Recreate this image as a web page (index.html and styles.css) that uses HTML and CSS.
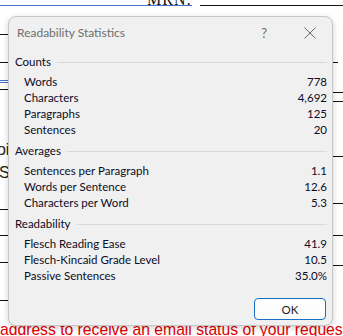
FILE: index.html
```html
<!DOCTYPE html>
<html>
<head>
<meta charset="utf-8">
<link rel="stylesheet" href="styles.css">
</head>
<body>
<div class="doc">
  <div class="top">
    <div class="top-left"><span class="mrn">MRN:</span></div>
    <div class="top-right"></div>
  </div>
  <div class="row r35"><span class="seg l"></span></div>
  <div class="row r63"><span class="seg l"></span><span class="seg tick"></span></div>
  <div class="row r81"><span class="seg l blue"></span></div>
  <div class="row r83"><span class="seg l blue"></span></div>
  <div class="row r90"><span class="seg l"></span></div>
  <div class="row r93"><span class="seg r"></span></div>
  <div class="row r102"><span class="seg r"></span></div>
  <div class="frag frag1">poi</div>
  <div class="frag frag2">Se</div>
  <div class="row r158"><span class="seg r"></span></div>
  <div class="row r205"><span class="seg r"></span></div>
  <div class="row r211"><span class="seg l"></span></div>
  <div class="row r237"><span class="seg l"></span><span class="seg r"></span></div>
  <div class="row r264"><span class="seg l"></span></div>
  <div class="row r267"><span class="seg r"></span></div>
  <div class="row r302"><span class="seg l"></span></div>
  <div class="red">address to receive an email status of your request</div>

  <div class="dialog">
    <div class="titlebar">
      <span class="title">Readability Statistics</span>
      <span class="help">?</span>
      <svg class="close" width="12" height="12" viewBox="0 0 12 12"><path d="M0.5 0.5 L11.5 11.5 M11.5 0.5 L0.5 11.5" stroke="#6b6b6b" stroke-width="1" fill="none"/></svg>
    </div>
    <div class="body">
      <div class="section">
        <div class="head"><span>Counts</span><span class="rule"></span></div>
        <div class="item"><span>Words</span><span>778</span></div>
        <div class="item"><span>Characters</span><span>4,692</span></div>
        <div class="item"><span>Paragraphs</span><span>125</span></div>
        <div class="item"><span>Sentences</span><span>20</span></div>
      </div>
      <div class="section">
        <div class="head"><span>Averages</span><span class="rule"></span></div>
        <div class="item"><span>Sentences per Paragraph</span><span>1.1</span></div>
        <div class="item"><span>Words per Sentence</span><span>12.6</span></div>
        <div class="item"><span>Characters per Word</span><span>5.3</span></div>
      </div>
      <div class="section">
        <div class="head"><span>Readability</span><span class="rule"></span></div>
        <div class="item"><span>Flesch Reading Ease</span><span>41.9</span></div>
        <div class="item"><span>Flesch-Kincaid Grade Level</span><span>10.5</span></div>
        <div class="item"><span>Passive Sentences</span><span>35.0%</span></div>
      </div>
      <div class="actions"><button class="ok">OK</button></div>
    </div>
  </div>
</div>
</body>
</html>
```
FILE: styles.css
```css
html, body { margin: 0; padding: 0; background: #fff; }
.doc {
  position: relative;
  width: 343px;
  height: 336px;
  overflow: hidden;
  background: #fff;
}
.top { display: flex; height: 6px; }
.top-left {
  width: 192px;
  height: 5px;
  border-bottom: 1px solid #4472c4;
  display: flex;
  justify-content: flex-end;
  overflow: hidden;
}
.mrn {
  font-family: "Liberation Serif", serif;
  font-size: 16px;
  line-height: 16px;
  margin-top: -8px;
  color: #111;
  letter-spacing: 1px;
}
.top-right { margin-left: 8px; flex: 1; height: 5px; border-bottom: 1px solid #111; }
.row { display: flex; justify-content: space-between; height: 1px; }
.seg { display: block; height: 1px; background: #111; }
.seg.l { width: 9px; }
.seg.r { width: 10px; margin-left: auto; }
.seg.tick { width: 5px; margin-left: auto; margin-right: 5px; }
.seg.blue { background: #4472c4; }
.r35 { margin-top: 28px; }
.r63 { margin-top: 27px; }
.r81 { margin-top: 17px; }
.r83 { margin-top: 1px; }
.r90 { margin-top: 6px; }
.r93 { margin-top: 2px; }
.r102 { margin-top: 8px; }
.frag {
  font-family: "Liberation Sans", sans-serif;
  font-size: 16px;
  line-height: 16px;
  color: #222;
}
.frag1 { margin-top: 40px; margin-left: -12px; }
.frag2 { margin-top: 7px; margin-left: -1px; height: 12px; }
.r158 { margin-top: -21px; }
.r205 { margin-top: 46px; }
.r211 { margin-top: 5px; }
.r237 { margin-top: 25px; }
.r264 { margin-top: 26px; }
.r267 { margin-top: 2px; }
.r302 { margin-top: 34px; }
.red {
  font-family: "Liberation Sans", sans-serif;
  font-size: 15.7px;
  line-height: 18px;
  color: #e00000;
  margin-top: 20px;
  margin-left: 0;
  white-space: nowrap;
}

.dialog {
  position: absolute;
  left: 8px;
  top: 16px;
  width: 325px;
  height: 310px;
  box-sizing: border-box;
  background: #f0f0f0;
  border: 1px solid #c6c6c6;
  border-radius: 8px;
  box-shadow: 0 2px 6px rgba(0,0,0,0.18);
  font-family: "Lato", sans-serif;
  font-size: 11.5px;
  color: #0c0c26;
  display: flex;
  flex-direction: column;
}
.titlebar {
  height: 31px;
  display: flex;
  align-items: center;
  padding: 0 0 0 8px;
}
.title { flex: 1; color: #6e6e6e; font-size: 12px; }
.help { color: #6e6e6e; font-size: 13px; margin-right: 37px; }
.close { margin-right: 16px; }
.body { padding: 0 5px 0 6px; display: flex; flex-direction: column; flex: 1; }
.section { margin-top: 5px; }
.section:first-child { margin-top: 6px; }
.head {
  display: flex;
  align-items: center;
  height: 16px;
  line-height: 16px;
  margin-bottom: 4px;
}
.rule { flex: 1; height: 1px; background: #d9d9d9; margin-left: 6px; }
.item {
  display: flex;
  justify-content: space-between;
  height: 16px;
  line-height: 16px;
  padding-left: 9px;
}
.actions { display: flex; justify-content: flex-end; margin-top: 14px; }
.ok {
  width: 72px;
  height: 22px;
  box-sizing: border-box;
  margin-right: 1px;
  background: #fdfdfd;
  border: 1px solid #1a6fc4;
  border-radius: 4px;
  font-family: "Lato", sans-serif;
  font-size: 11.5px;
  color: #1c1c1c;
  padding: 0;
}
```
